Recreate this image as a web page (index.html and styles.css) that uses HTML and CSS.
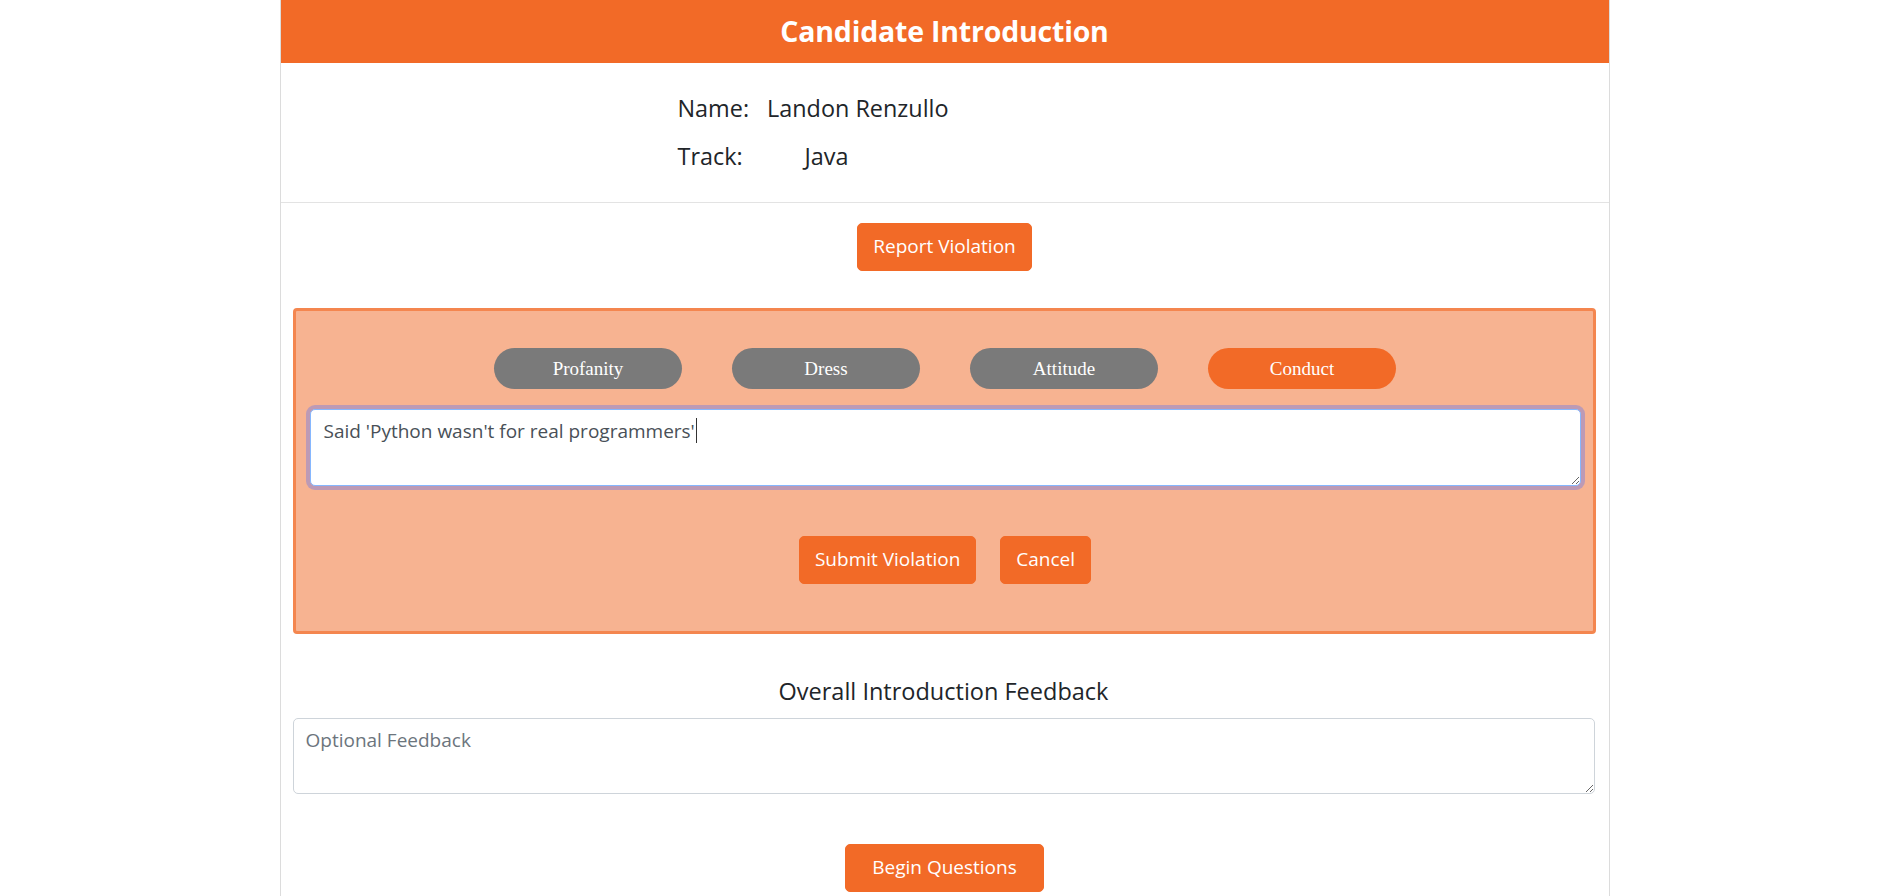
FILE: index.html
```html
<!DOCTYPE html>
<html lang="en">
<head>
<meta charset="utf-8">
<title>Candidate Introduction</title>
<link rel="stylesheet" href="styles.css">
</head>
<body>
<div class="page">
  <header class="header">
    <h1 class="title">Candidate Introduction</h1>
  </header>

  <section class="info">
    <div class="info-row">
      <span class="label">Name:</span>
      <span class="value value-name">Landon Renzullo</span>
    </div>
    <div class="info-row">
      <span class="label">Track:</span>
      <span class="value value-track">Java</span>
    </div>
  </section>

  <div class="action-row action-report">
    <button class="btn">Report Violation</button>
  </div>

  <section class="violation">
    <div class="pills">
      <button class="pill">Profanity</button>
      <button class="pill">Dress</button>
      <button class="pill">Attitude</button>
      <button class="pill pill-active">Conduct</button>
    </div>
    <div class="field field-focus" contenteditable="true">Said 'Python wasn't for real programmers'<span class="caret"></span></div>
    <div class="action-row action-submit">
      <button class="btn">Submit Violation</button>
      <button class="btn">Cancel</button>
    </div>
  </section>

  <section class="feedback">
    <h2 class="feedback-title">Overall Introduction Feedback</h2>
    <textarea class="field field-plain" placeholder="Optional Feedback"></textarea>
  </section>

  <div class="action-row action-begin">
    <button class="btn btn-wide">Begin Questions</button>
  </div>
</div>
</body>
</html>
```

FILE: styles.css
```css
* {
  box-sizing: border-box;
}

html, body {
  margin: 0;
  padding: 0;
  background: #ffffff;
  overflow: hidden;
}

body {
  font-family: "Open Sans", "Noto Sans", Arial, sans-serif;
  color: #212529;
}

.page {
  width: 1330px;
  margin: 0 0 0 calc(50% - 666px);
  min-height: 896px;
  border-left: 1px solid #dcdcdc;
  border-right: 1px solid #dcdcdc;
  padding-bottom: 40px;
}

.header {
  background: #f26a27;
  height: 63px;
  display: flex;
  align-items: center;
  justify-content: center;
}

.title {
  margin: 0;
  color: #ffffff;
  font-size: 28.5px;
  font-weight: 700;
  line-height: 1;
  letter-spacing: -0.2px;
}

.info {
  display: flex;
  flex-direction: column;
  gap: 12px;
  padding: 27px 0 28px 397px;
  border-bottom: 1px solid #e3e3e3;
}

.info-row {
  display: flex;
  font-size: 23.4px;
  line-height: 36px;
  color: #212529;
}

.value-name {
  margin-left: 18px;
}

.value-track {
  margin-left: 62px;
}

.action-row {
  display: flex;
  justify-content: center;
  gap: 24px;
}

.action-report {
  margin-top: 20px;
}

.btn {
  font-family: "Open Sans", "Noto Sans", Arial, sans-serif;
  font-size: 19px;
  line-height: 27px;
  padding: 9px 15px 10px;
  color: #ffffff;
  background: #f26a27;
  border: 1px solid #f26a27;
  border-radius: 5px;
  cursor: pointer;
}

.btn-wide {
  padding-left: 26px;
  padding-right: 26px;
}

.violation {
  margin: 37px 13px 0 12px;
  background: #f7b391;
  border: 3px solid #f4864f;
  border-radius: 4px;
  padding: 37px 12px 47px 14px;
}

.pills {
  display: flex;
  justify-content: center;
  gap: 50px;
}

.pill {
  width: 188px;
  height: 41px;
  border: none;
  border-radius: 21px;
  background: #7a7a7a;
  color: #ffffff;
  font-family: "Liberation Serif", "Times New Roman", serif;
  font-size: 19px;
  cursor: pointer;
}

.pill-active {
  background: #f26a27;
}

.field {
  display: block;
  width: 100%;
  font-family: "Open Sans", "Noto Sans", Arial, sans-serif;
  font-size: 19px;
  line-height: 27px;
  color: #495057;
  background: #ffffff;
  border-radius: 5px;
  outline: none;
}

.field-focus {
  margin-top: 20px;
  height: 77px;
  padding: 8px 13px;
  border: 1px solid #86b7fe;
  box-shadow: 0 0 0 4px rgba(80, 110, 250, 0.35);
  overflow: auto;
  resize: both;
  white-space: pre-wrap;
}

.caret {
  display: inline-block;
  width: 1px;
  height: 25px;
  margin-left: 1px;
  background: #333333;
  vertical-align: -5px;
}

.action-submit {
  margin-top: 50px;
}

.feedback {
  margin: 39px 14px 0 12px;
}

.feedback-title {
  margin: 0 0 9px;
  text-align: center;
  font-size: 23.5px;
  font-weight: 400;
  line-height: 36px;
  color: #212529;
}

.field-plain {
  height: 76px;
  padding: 8px 12px;
  border: 1px solid #ced4da;
}

.field-plain::placeholder {
  color: #6c757d;
}

.action-begin {
  margin-top: 50px;
}
```
